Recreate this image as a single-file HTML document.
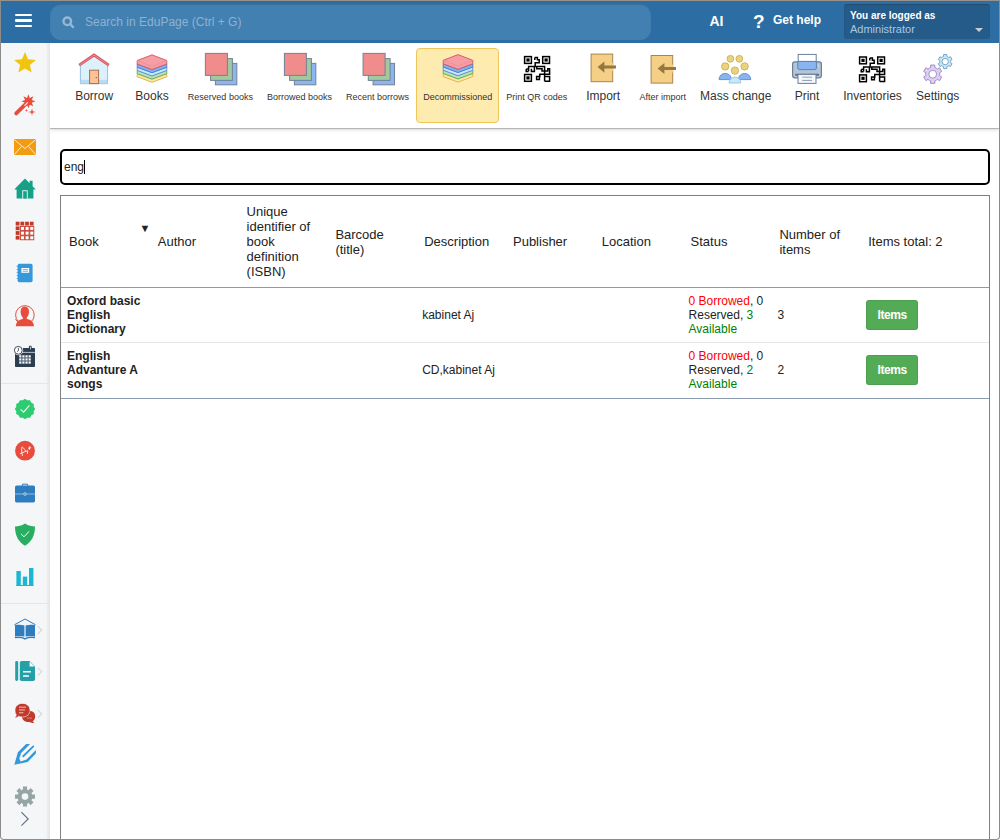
<!DOCTYPE html>
<html><head><meta charset="utf-8">
<style>
*{box-sizing:border-box}
html,body{margin:0;padding:0;width:1000px;height:840px;overflow:hidden;background:#fff;font-family:"Liberation Sans",sans-serif;color:#333}
.abs{position:absolute}
#frame{position:absolute;left:0;top:0;width:1000px;height:840px;border:1px solid #8c8c8c;border-top-color:#9a928a;border-radius:0 0 4px 4px;pointer-events:none;z-index:50}
#hdr{position:absolute;left:1px;top:1px;width:998px;height:42px;background:#2c6ea3;z-index:6}
.burger{position:absolute;left:13.6px;width:17.6px;height:2.2px;background:#fff;border-radius:1px}
#search{position:absolute;left:49px;top:3px;width:601px;height:35.5px;border-radius:11px;background:#4280b1;box-shadow:inset 0 1px 1px rgba(0,0,0,.12)}
#search .ph{position:absolute;left:35px;top:11px;font-size:12px;color:#8db2d2;white-space:nowrap}
#side{position:absolute;left:1px;top:43px;width:49px;height:796px;background:#f4f6f8;border-right:1px solid #e3e5e8;box-shadow:inset -3px 0 2px -1px rgba(0,0,0,.05);z-index:5;border-bottom-left-radius:3px}
#tb{position:absolute;left:50px;top:43px;width:949px;height:85px;background:#fff;box-shadow:0 1px 1px rgba(0,0,0,.22),0 2px 4px rgba(0,0,0,.12);z-index:4}
.lbl{position:absolute;top:89px;width:120px;text-align:center;font-size:12px;color:#333;white-space:nowrap;z-index:5;line-height:14px}
.lbl.s{font-size:9px;top:91px;line-height:12px}
#tbl{position:absolute;left:60px;top:195px;width:930px;height:660px;border:1px solid #808080}
table{border-collapse:collapse;table-layout:fixed;width:928px;font-family:"Liberation Sans",sans-serif}
th{font-weight:normal;font-size:13px;line-height:15px;text-align:left;padding:8px 8px 8px 8px;vertical-align:middle;color:#222;height:91px;border-bottom:1px solid #8a9bb0}
td{font-size:12px;line-height:14px;padding:6px 6px;vertical-align:middle;color:#222;border-bottom:1px solid #e6e6e6}
tr.last td{border-bottom:1px solid #8a9bb0;padding-bottom:7px}
td b{font-weight:bold}
.red{color:#f00}.grn{color:#008000}
.ibtn{display:inline-block;width:52px;height:30px;background:#54ab56;border-radius:3px;color:#fff;font-weight:bold;font-size:12px;line-height:30px;text-align:center;letter-spacing:-0.4px;box-shadow:inset 0 0 0 1px rgba(0,0,0,.07)}
</style></head><body>
<div id="hdr">
  <div class="burger" style="top:12.9px"></div>
  <div class="burger" style="top:18.4px"></div>
  <div class="burger" style="top:23.8px"></div>
  <div id="search">
    <svg class="abs" style="left:12px;top:12px" width="13" height="13" viewBox="0 0 13 13"><circle cx="5.3" cy="5.3" r="3.8" fill="none" stroke="#94b7d5" stroke-width="2.4"/><line x1="8" y1="8" x2="11.1" y2="11.1" stroke="#94b7d5" stroke-width="2.4" stroke-linecap="round"/></svg>
    <div class="ph">Search in EduPage (Ctrl + G)</div>
  </div>
  <div class="abs" style="left:708.5px;top:12px;font-size:14px;font-weight:bold;color:#fff">AI</div>
  <div class="abs" style="left:752px;top:10px;font-size:19px;font-weight:bold;color:#fff">?</div>
  <div class="abs" style="left:772px;top:12px;font-size:12px;font-weight:bold;color:#fff">Get help</div>
  <div class="abs" style="left:843px;top:3px;width:146px;height:35px;background:#255b89;border-radius:3px;box-shadow:inset 0 1px 1px rgba(0,0,0,.15)">
    <div class="abs" style="left:6px;top:6px;font-size:10px;font-weight:bold;color:#fff;white-space:nowrap">You are logged as</div>
    <div class="abs" style="left:6px;top:19px;font-size:11px;color:#a9c7e3;white-space:nowrap">Administrator</div>
    <div class="abs" style="left:131px;top:24px;width:0;height:0;border-left:4px solid transparent;border-right:4px solid transparent;border-top:4px solid #c8ccd0"></div>
  </div>
</div>

<div id="side"></div>
<svg class="abs" style="left:0;top:0;z-index:6" width="50" height="840" viewBox="0 0 50 840"><polygon points="25.00,52.00 28.00,59.27 35.84,59.88 29.85,64.98 31.70,72.62 25.00,68.50 18.30,72.62 20.15,64.98 14.16,59.88 22.00,59.27" fill="#f1c40f"/><polygon points="28.40,94.30 29.78,97.97 33.35,96.35 31.73,99.92 35.40,101.30 31.73,102.68 33.35,106.25 29.78,104.63 28.40,108.30 27.02,104.63 23.45,106.25 25.07,102.68 21.40,101.30 25.07,99.92 23.45,96.35 27.02,97.97" fill="#e74c3c"/><line x1="16.2" y1="113.4" x2="27.4" y2="102.4" stroke="#e74c3c" stroke-width="3.8" stroke-linecap="round"/><line x1="24.8" y1="105.4" x2="27.6" y2="102.6" stroke="#fff" stroke-width="1.1" stroke-linecap="round" opacity=".95"/><polygon points="32.00,108.40 32.78,111.22 35.60,112.00 32.78,112.78 32.00,115.60 31.22,112.78 28.40,112.00 31.22,111.22" fill="#e74c3c"/><polygon points="26.40,108.70 26.82,109.98 28.10,110.40 26.82,110.82 26.40,112.10 25.98,110.82 24.70,110.40 25.98,109.98" fill="#e74c3c"/><rect x="14" y="139" width="22" height="16" fill="#f39c12"/><path d="M14.3,139.6 L25,148.6 L35.7,139.6 M14.3,154.6 L21.3,146.6 M35.7,154.6 L28.7,146.6" stroke="#fff" stroke-width="0.9" fill="none" opacity=".9"/><path d="M14.2,189.6 L25,178.6 L29.6,183.2 L29.6,180.8 L32.6,180.8 L32.6,186.2 L35.8,189.6 L33.4,189.6 L33.4,198.6 L16.6,198.6 L16.6,189.6 Z" fill="#16a085"/><rect x="22.3" y="190.3" width="5.4" height="8.3" fill="#fff" opacity=".95"/><rect x="23.2" y="191.2" width="3.6" height="7.4" fill="#16a085"/><rect x="15.70" y="221.70" width="3.80" height="3.80" fill="#c0392b"/><rect x="20.40" y="221.70" width="3.80" height="3.80" fill="#c0392b"/><rect x="25.10" y="221.70" width="3.80" height="3.80" fill="#c0392b"/><rect x="29.80" y="221.70" width="3.80" height="3.80" fill="#c0392b"/><rect x="15.70" y="226.40" width="3.80" height="3.80" fill="#c0392b"/><rect x="19.90" y="225.90" width="4.90" height="4.90" fill="#c0392b"/><rect x="20.85" y="226.85" width="3.10" height="3.10" fill="#fff"/><rect x="24.60" y="225.90" width="4.90" height="4.90" fill="#c0392b"/><rect x="25.55" y="226.85" width="3.10" height="3.10" fill="#fff"/><rect x="29.30" y="225.90" width="4.90" height="4.90" fill="#c0392b"/><rect x="30.25" y="226.85" width="3.10" height="3.10" fill="#fff"/><rect x="15.70" y="231.10" width="3.80" height="3.80" fill="#c0392b"/><rect x="19.90" y="230.60" width="4.90" height="4.90" fill="#c0392b"/><rect x="20.85" y="231.55" width="3.10" height="3.10" fill="#fff"/><rect x="24.60" y="230.60" width="4.90" height="4.90" fill="#c0392b"/><rect x="25.55" y="231.55" width="3.10" height="3.10" fill="#fff"/><rect x="29.30" y="230.60" width="4.90" height="4.90" fill="#c0392b"/><rect x="30.25" y="231.55" width="3.10" height="3.10" fill="#fff"/><rect x="15.70" y="235.80" width="3.80" height="3.80" fill="#c0392b"/><rect x="19.90" y="235.30" width="4.90" height="4.90" fill="#c0392b"/><rect x="20.85" y="236.25" width="3.10" height="3.10" fill="#fff"/><rect x="24.60" y="235.30" width="4.90" height="4.90" fill="#c0392b"/><rect x="25.55" y="236.25" width="3.10" height="3.10" fill="#fff"/><rect x="29.30" y="235.30" width="4.90" height="4.90" fill="#c0392b"/><rect x="30.25" y="236.25" width="3.10" height="3.10" fill="#fff"/><rect x="17.6" y="263.8" width="15" height="18.4" rx="1.6" fill="#3498db"/><line x1="16.6" y1="266.5" x2="18.6" y2="266.5" stroke="#3498db" stroke-width="0.9" opacity=".8"/><line x1="16.6" y1="269.5" x2="18.6" y2="269.5" stroke="#3498db" stroke-width="0.9" opacity=".8"/><line x1="16.6" y1="272.5" x2="18.6" y2="272.5" stroke="#3498db" stroke-width="0.9" opacity=".8"/><line x1="16.6" y1="275.5" x2="18.6" y2="275.5" stroke="#3498db" stroke-width="0.9" opacity=".8"/><line x1="16.6" y1="278.5" x2="18.6" y2="278.5" stroke="#3498db" stroke-width="0.9" opacity=".8"/><rect x="21.4" y="268" width="7.8" height="4.8" fill="#fff"/><line x1="22.6" y1="269.6" x2="28" y2="269.6" stroke="#3498db" stroke-width="0.7"/><line x1="22.6" y1="271.3" x2="28" y2="271.3" stroke="#3498db" stroke-width="0.7"/><path d="M18.2,321.4 A9.3,9.3 0 1,1 31.2,321.8" fill="none" stroke="#e74c3c" stroke-width="1"/><path d="M15.4,319.4 L18.2,322 L20.8,320.4" fill="none" stroke="#e74c3c" stroke-width="1"/><path d="M24.8,306.6 C27.6,306.6 29,308.8 29,311.8 C29,314.4 28,316.4 26.8,317.4 L26.8,319 C30.6,319.6 33.6,321.4 34,326.2 L15.8,326.2 C16.2,321.4 19.2,319.6 22.8,319 L22.8,317.4 C21.6,316.4 20.6,314.4 20.6,311.8 C20.6,308.8 22,306.6 24.8,306.6 Z" fill="#e74c3c"/><rect x="15" y="348" width="20" height="19" rx="0.8" fill="#2c3e50"/><line x1="22" y1="352.4" x2="35" y2="352.4" stroke="#c8ced6" stroke-width="0.9"/><rect x="28.9" y="345.8" width="2.8" height="4.4" rx="1" fill="#2c3e50"/><rect x="30" y="346.6" width="0.8" height="2.8" fill="#dde2e8"/><rect x="19" y="355" width="12" height="9" fill="#5d6c7c"/><rect x="19.30" y="355.40" width="1.9" height="1.9" fill="#fff"/><rect x="22.45" y="355.40" width="1.9" height="1.9" fill="#fff"/><rect x="25.60" y="355.40" width="1.9" height="1.9" fill="#fff"/><rect x="28.75" y="355.40" width="1.9" height="1.9" fill="#fff"/><rect x="19.30" y="358.50" width="1.9" height="1.9" fill="#fff"/><rect x="22.45" y="358.50" width="1.9" height="1.9" fill="#fff"/><rect x="25.60" y="358.50" width="1.9" height="1.9" fill="#fff"/><rect x="28.75" y="358.50" width="1.9" height="1.9" fill="#fff"/><rect x="19.30" y="361.60" width="1.9" height="1.9" fill="#fff"/><rect x="22.45" y="361.60" width="1.9" height="1.9" fill="#fff"/><rect x="25.60" y="361.60" width="1.9" height="1.9" fill="#fff"/><rect x="28.75" y="361.60" width="1.9" height="1.9" fill="#fff"/><circle cx="18.3" cy="350.3" r="4.9" fill="#f4f6f8"/><circle cx="18.3" cy="350.3" r="3.9" fill="#fff" stroke="#2c3e50" stroke-width="0.9"/><path d="M18.4,347.8 L18.4,350.8 L17.2,351.6" stroke="#2c3e50" stroke-width="0.8" fill="none"/><rect x="0" y="383" width="49" height="1" fill="#e3e5e8"/><polygon points="25.00,398.80 27.33,400.31 30.10,400.17 31.36,402.64 33.83,403.90 33.69,406.67 35.20,409.00 33.69,411.33 33.83,414.10 31.36,415.36 30.10,417.83 27.33,417.69 25.00,419.20 22.67,417.69 19.90,417.83 18.64,415.36 16.17,414.10 16.31,411.33 14.80,409.00 16.31,406.67 16.17,403.90 18.64,402.64 19.90,400.17 22.67,400.31" fill="#2ecc71"/><path d="M20.6,409.4 L23.6,412.2 L29.4,405.4" stroke="#fff" stroke-width="1.1" fill="none" opacity=".9"/><circle cx="25" cy="450.7" r="9.9" fill="#e74c3c"/><path d="M22.4,455.6 C21.7,452.2 21.4,449.2 21.9,447.2 C22.8,446.8 24.2,448.8 25.4,450.6 M20.4,453.6 C23,452.4 25.6,451.2 27.8,450.8 L27.4,453.4 M28.4,448.2 L30.8,447.8 M29.8,446.6 L29.4,449.4" stroke="#fff" stroke-width="0.9" fill="none" stroke-linecap="round" opacity=".95"/><rect x="15" y="485.6" width="20" height="16.8" rx="1.6" fill="#2d7dbf"/><path d="M22.4,485.8 L22.4,484.2 L27.6,484.2 L27.6,485.8" stroke="#2d7dbf" stroke-width="1" fill="none"/><line x1="15" y1="494" x2="35" y2="494" stroke="#9cc3e4" stroke-width="0.9"/><circle cx="25" cy="494" r="1.3" fill="#2d7dbf" stroke="#cfe2f2" stroke-width="0.8"/><path d="M25,523.4 C28.4,525.6 31.6,526.4 35,526.4 C35,536 31.2,542 25,545.8 C18.8,542 15,536 15,526.4 C18.4,526.4 21.6,525.6 25,523.4 Z" fill="#27ae60"/><path d="M21.2,534 L24,536.8 L29,531.4" stroke="#fff" stroke-width="1" fill="none"/><rect x="16.4" y="571" width="4.4" height="15" fill="#1ab6d2"/><rect x="22.8" y="576.6" width="4.4" height="9.4" fill="#1ab6d2"/><rect x="29" y="568" width="4.4" height="18" fill="#1ab6d2"/><rect x="16.4" y="585" width="17" height="1" fill="#1ab6d2"/><rect x="0" y="603" width="49" height="1" fill="#e3e5e8"/><path d="M14.4,624.8 L25,619 L35.6,624.8" stroke="#2d7dbf" stroke-width="1" fill="none"/><path d="M15,625.2 C18,624.6 21.4,624.6 24.4,625.6 L24.4,636.6 C21.4,635.8 18,635.8 15,636.4 Z" fill="#2d7dbf"/><path d="M35,625.2 C32,624.6 28.6,624.6 25.6,625.6 L25.6,636.6 C28.6,635.8 32,635.8 35,636.4 Z" fill="#2d7dbf"/><path d="M15,637.6 C18.5,637 22,637 25,638.8 C28,637 31.5,637 35,637.6" stroke="#2d7dbf" stroke-width="1.5" fill="none"/><rect x="15.2" y="661" width="3" height="20" rx="1.4" fill="#26a0a7"/><path d="M21.6,661 L29.6,661 L35,666.4 L35,679.2 Q35,681 33.2,681 L21.6,681 Q19.8,681 19.8,679.2 L19.8,662.8 Q19.8,661 21.6,661 Z" fill="#26a0a7"/><path d="M29.6,661.6 L34.4,666.4 L29.6,666.4 Z" fill="#fff"/><rect x="23" y="671" width="8" height="1.6" rx=".6" fill="#fff"/><rect x="23" y="675.2" width="6" height="1.6" rx=".6" fill="#fff"/><path d="M28.6,710.8 C33.4,710.8 35.2,713.4 35.2,716.4 C35.2,718.6 34.2,720.2 32.6,721.2 L34.4,723 C32.2,723 30.4,722.4 29,722 C24.8,722 22,719.8 22,716.4 C22,713.4 24,710.8 28.6,710.8 Z" fill="#c0392b"/><path d="M22.5,703.4 C27.2,703.4 30,706.4 30,710.2 C30,714 27.2,717 22.5,717 C21,717 19.8,716.8 18.6,716.2 C17.6,717.2 16.2,718 14.8,718 C15.8,717 16.2,715.8 16.2,714.6 C15.4,713.4 15,712 15,710.2 C15,706.4 17.8,703.4 22.5,703.4 Z" fill="#c0392b" stroke="#f4f6f8" stroke-width=".6"/><rect x="19" y="706.6" width="7" height="1.1" fill="#f1b4ad"/><rect x="19" y="709.4" width="6" height="1.1" fill="#f1b4ad"/><rect x="19" y="712.2" width="4.4" height="1.1" fill="#f1b4ad"/><rect x="27" y="717.6" width="5" height="0.9" fill="#e6867c"/><path d="M26.1,744.1 L30.1,744.1 L21.2,752.9 L19.3,758.6 L20.6,761.4 L26.6,759.4 L35.9,750.1 L35.9,753.6 L27.6,762 L14.3,764.8 L17.9,752.3 Z" fill="#3498db"/><line x1="23.2" y1="756.2" x2="33.3" y2="746.4" stroke="#3498db" stroke-width="1.9" stroke-linecap="round"/><path d="M22.96,789.49 L22.90,786.62 L27.10,786.62 L27.04,789.49 L27.83,789.76 L28.58,790.13 L30.58,788.06 L33.54,791.02 L31.47,793.02 L31.84,793.77 L32.11,794.56 L34.98,794.50 L34.98,798.70 L32.11,798.64 L31.84,799.43 L31.47,800.18 L33.54,802.18 L30.58,805.14 L28.58,803.07 L27.83,803.44 L27.04,803.71 L27.10,806.58 L22.90,806.58 L22.96,803.71 L22.17,803.44 L21.42,803.07 L19.42,805.14 L16.46,802.18 L18.53,800.18 L18.16,799.43 L17.89,798.64 L15.02,798.70 L15.02,794.50 L17.89,794.56 L18.16,793.77 L18.53,793.02 L16.46,791.02 L19.42,788.06 L21.42,790.13 L22.17,789.76 Z M28.30,796.60 A3.3,3.3 0 1,0 21.70,796.60 A3.3,3.3 0 1,0 28.30,796.60 Z" fill="#95a5a6" fill-rule="evenodd"/><path d="M37.8,626.2 L41.8,630 L37.8,633.8" stroke="#d4d8dc" stroke-width="1.1" fill="none"/><path d="M37.8,667.8000000000001 L41.8,671.6 L37.8,675.4" stroke="#d4d8dc" stroke-width="1.1" fill="none"/><path d="M37.8,710.2 L41.8,714 L37.8,717.8" stroke="#d4d8dc" stroke-width="1.1" fill="none"/><path d="M21.4,812.2 L28.2,819 L21.4,825.6" stroke="#5d6e86" stroke-width="1.1" fill="none"/></svg>
<div id="tb"></div>
<div class="abs" style="left:416px;top:47.5px;width:83px;height:75px;background:#fdebb0;border:1px solid #f0c65c;border-radius:4px;z-index:5"></div>
<svg class="abs" style="left:0;top:0;z-index:5" width="1000" height="130" viewBox="0 0 1000 130"><path d="M80.4,65 L94,55.6 L107.6,65 L107.6,83.7 L80.4,83.7 Z" fill="#dcf1fc" stroke="#9bbde0" stroke-width="1"/><rect x="80.9" y="79.8" width="26.2" height="3.4" fill="#b9dcf5"/><path d="M79.2,65.2 L94,55 L108.8,65.2" stroke="#d95762" stroke-width="2.8" fill="none" stroke-linejoin="miter"/><path d="M79.6,65 L94,55.1 L108.4,65" stroke="#f08a92" stroke-width="1.0" fill="none" stroke-linejoin="miter"/><rect x="89.6" y="70.2" width="9" height="13.4" fill="#fec297" stroke="#a86e4e" stroke-width="1"/><circle cx="96.3" cy="77.6" r=".7" fill="#7a4a30"/><path d="M137.2,73.60 L152,79.10 L166.8,73.60 L166.8,76.80 L152,82.30 L137.2,76.80 Z" fill="#fde79a" stroke="#d5b24e" stroke-width="0.9" stroke-linejoin="round"/><path d="M137.2,70.40 L152,75.90 L166.8,70.40 L166.8,73.60 L152,79.10 L137.2,73.60 Z" fill="#b8e2b8" stroke="#5ea865" stroke-width="0.9" stroke-linejoin="round"/><path d="M137.2,67.20 L152,72.70 L166.8,67.20 L166.8,70.40 L152,75.90 L137.2,70.40 Z" fill="#c6eafc" stroke="#5a8fd4" stroke-width="0.9" stroke-linejoin="round"/><path d="M137.2,64.00 L152,69.50 L166.8,64.00 L166.8,67.20 L152,72.70 L137.2,67.20 Z" fill="#80b0f2" stroke="#4a7ed0" stroke-width="0.9" stroke-linejoin="round"/><path d="M152,54.8 L166.8,60.5 L166.8,64.0 L152,69.5 L137.2,64.0 L137.2,60.5 Z" fill="#f59ea6" stroke="#d9535e" stroke-width="0.9" stroke-linejoin="round"/><path d="M137.7,60.8 L152,66.2 L166.3,60.8" fill="none" stroke="#ec8a92" stroke-width="0.7"/><path d="M443.2,73.40 L458,78.90 L472.8,73.40 L472.8,76.60 L458,82.10 L443.2,76.60 Z" fill="#fde79a" stroke="#d5b24e" stroke-width="0.9" stroke-linejoin="round"/><path d="M443.2,70.20 L458,75.70 L472.8,70.20 L472.8,73.40 L458,78.90 L443.2,73.40 Z" fill="#b8e2b8" stroke="#5ea865" stroke-width="0.9" stroke-linejoin="round"/><path d="M443.2,67.00 L458,72.50 L472.8,67.00 L472.8,70.20 L458,75.70 L443.2,70.20 Z" fill="#c6eafc" stroke="#5a8fd4" stroke-width="0.9" stroke-linejoin="round"/><path d="M443.2,63.80 L458,69.30 L472.8,63.80 L472.8,67.00 L458,72.50 L443.2,67.00 Z" fill="#80b0f2" stroke="#4a7ed0" stroke-width="0.9" stroke-linejoin="round"/><path d="M458,54.6 L472.8,60.300000000000004 L472.8,63.8 L458,69.3 L443.2,63.8 L443.2,60.300000000000004 Z" fill="#f59ea6" stroke="#d9535e" stroke-width="0.9" stroke-linejoin="round"/><path d="M443.7,60.6 L458,66.0 L472.3,60.6" fill="none" stroke="#ec8a92" stroke-width="0.7"/><rect x="215.40" y="63.40" width="21.4" height="21.4" fill="#8ab6f2" stroke="#74849a" stroke-width="1.05"/><rect x="210.60" y="58.60" width="21.8" height="21.8" fill="#a2c99e" stroke="#74849a" stroke-width="1.05"/><rect x="205.40" y="53.40" width="22" height="22" fill="#f08c8c" stroke="#74849a" stroke-width="1.05"/><rect x="294.40" y="63.40" width="21.4" height="21.4" fill="#8ab6f2" stroke="#74849a" stroke-width="1.05"/><rect x="289.60" y="58.60" width="21.8" height="21.8" fill="#a2c99e" stroke="#74849a" stroke-width="1.05"/><rect x="284.40" y="53.40" width="22" height="22" fill="#f08c8c" stroke="#74849a" stroke-width="1.05"/><rect x="373.10" y="63.40" width="21.4" height="21.4" fill="#8ab6f2" stroke="#74849a" stroke-width="1.05"/><rect x="368.30" y="58.60" width="21.8" height="21.8" fill="#a2c99e" stroke="#74849a" stroke-width="1.05"/><rect x="363.10" y="53.40" width="22" height="22" fill="#f08c8c" stroke="#74849a" stroke-width="1.05"/><rect x="524.60" y="56.60" width="6.80" height="6.80" fill="none" stroke="#000" stroke-width="1.5"/><rect x="526.40" y="58.40" width="3.20" height="3.20" fill="#000"/><rect x="542.70" y="56.60" width="6.80" height="6.80" fill="none" stroke="#000" stroke-width="1.5"/><rect x="544.50" y="58.40" width="3.20" height="3.20" fill="#000"/><rect x="524.60" y="74.50" width="6.80" height="6.80" fill="none" stroke="#000" stroke-width="1.5"/><rect x="526.40" y="76.30" width="3.20" height="3.20" fill="#000"/><polyline points="534.80,57.60 537.40,57.60 537.40,59.80 539.20,59.80 539.20,62.80 535.20,62.80 535.20,66.40" fill="none" stroke="#000" stroke-width="1.5"/><polyline points="534.80,57.60 534.80,60.00" fill="none" stroke="#000" stroke-width="1.5"/><polyline points="528.60,71.20 528.60,66.60 544.60,66.60 544.60,81.20" fill="none" stroke="#000" stroke-width="1.5"/><polyline points="526.20,69.00 528.60,69.00" fill="none" stroke="#000" stroke-width="1.5"/><polyline points="526.20,69.00 526.20,71.40 528.60,71.40" fill="none" stroke="#000" stroke-width="1.5"/><polyline points="531.40,68.80 531.40,71.40 534.40,71.40 534.40,66.60" fill="none" stroke="#000" stroke-width="1.5"/><polyline points="536.80,66.60 536.80,68.80 542.00,68.80 542.00,71.00 547.80,71.00 547.80,68.80 549.60,68.80 549.60,74.20 539.80,74.20 539.80,76.60 536.60,76.60 536.60,79.40 539.40,79.40 539.40,76.60" fill="none" stroke="#000" stroke-width="1.5"/><polyline points="544.60,76.60 549.60,76.60 549.60,81.20 544.60,81.20" fill="none" stroke="#000" stroke-width="1.5"/><rect x="859.60" y="57.00" width="6.80" height="6.80" fill="none" stroke="#000" stroke-width="1.5"/><rect x="861.40" y="58.80" width="3.20" height="3.20" fill="#000"/><rect x="877.70" y="57.00" width="6.80" height="6.80" fill="none" stroke="#000" stroke-width="1.5"/><rect x="879.50" y="58.80" width="3.20" height="3.20" fill="#000"/><rect x="859.60" y="74.90" width="6.80" height="6.80" fill="none" stroke="#000" stroke-width="1.5"/><rect x="861.40" y="76.70" width="3.20" height="3.20" fill="#000"/><polyline points="869.80,58.00 872.40,58.00 872.40,60.20 874.20,60.20 874.20,63.20 870.20,63.20 870.20,66.80" fill="none" stroke="#000" stroke-width="1.5"/><polyline points="869.80,58.00 869.80,60.40" fill="none" stroke="#000" stroke-width="1.5"/><polyline points="863.60,71.60 863.60,67.00 879.60,67.00 879.60,81.60" fill="none" stroke="#000" stroke-width="1.5"/><polyline points="861.20,69.40 863.60,69.40" fill="none" stroke="#000" stroke-width="1.5"/><polyline points="861.20,69.40 861.20,71.80 863.60,71.80" fill="none" stroke="#000" stroke-width="1.5"/><polyline points="866.40,69.20 866.40,71.80 869.40,71.80 869.40,67.00" fill="none" stroke="#000" stroke-width="1.5"/><polyline points="871.80,67.00 871.80,69.20 877.00,69.20 877.00,71.40 882.80,71.40 882.80,69.20 884.60,69.20 884.60,74.60 874.80,74.60 874.80,77.00 871.60,77.00 871.60,79.80 874.40,79.80 874.40,77.00" fill="none" stroke="#000" stroke-width="1.5"/><polyline points="879.60,77.00 884.60,77.00 884.60,81.60 879.60,81.60" fill="none" stroke="#000" stroke-width="1.5"/><rect x="591.1" y="54.1" width="21.6" height="27.6" fill="#f5cf85" stroke="#a8854a" stroke-width="1"/><rect x="612.0" y="63.123999999999995" width="1.4" height="8" fill="#f5cf85"/><path d="M597.6,67.124 L604.4,61.523999999999994 L604.4,65.624 L616,65.624 L616,68.624 L604.4,68.624 L604.4,72.72399999999999 Z" fill="#957840"/><rect x="651.1" y="55.5" width="21.6" height="27.6" fill="#f5cf85" stroke="#a8854a" stroke-width="1"/><rect x="672.0" y="64.524" width="1.4" height="8" fill="#f5cf85"/><path d="M657.6,68.524 L664.4,62.924 L664.4,67.024 L676,67.024 L676,70.024 L664.4,70.024 L664.4,74.124 Z" fill="#957840"/><path d="M719,79.6 A6.2,6.2 0 0,1 731.4,79.6 Z" fill="#88b4f0" stroke="#5a88d0" stroke-width="0.9"/><path d="M738.4,79.6 A6.2,6.2 0 0,1 750.8,79.6 Z" fill="#88b4f0" stroke="#5a88d0" stroke-width="0.9"/><path d="M729,83 A5.9,5.9 0 0,1 740.8,83 Z" fill="#c6e8fb" stroke="#9cc0e0" stroke-width="0.9"/><circle cx="730.4" cy="58.8" r="3.4" fill="#e8d47c" stroke="#c8a850" stroke-width="0.8"/><circle cx="739.4" cy="58.8" r="3.4" fill="#e8d47c" stroke="#c8a850" stroke-width="0.8"/><circle cx="725.2" cy="66.4" r="3.7" fill="#e8d47c" stroke="#c8a850" stroke-width="0.8"/><circle cx="744.6" cy="66.4" r="3.7" fill="#e8d47c" stroke="#c8a850" stroke-width="0.8"/><circle cx="734.9" cy="70.6" r="3.7" fill="#e8d47c" stroke="#c8a850" stroke-width="0.8"/><rect x="798.2" y="54.4" width="18" height="8" fill="#fff" stroke="#6c7f96" stroke-width="1"/><rect x="792.6" y="61.8" width="28.8" height="16" rx="2.2" fill="#b4c4d8" stroke="#6c7f96" stroke-width="1.2"/><path d="M797.8,61.4 L816.4,61.4 L816.4,68 Q816.4,69.6 814.8,69.6 L799.4,69.6 Q797.8,69.6 797.8,68 Z" fill="#8ab4f0" stroke="#5a80c0" stroke-width="1"/><line x1="796" y1="74.8" x2="818.2" y2="74.8" stroke="#5c6f86" stroke-width="2" stroke-linecap="round"/><rect x="798" y="74.4" width="18" height="9" fill="#f4f8fc" stroke="#6c7f96" stroke-width="1"/><line x1="802.2" y1="77.2" x2="812" y2="77.2" stroke="#a0b0c0" stroke-width="1.2"/><line x1="802.2" y1="80.4" x2="812" y2="80.4" stroke="#8a9cb0" stroke-width="1"/><circle cx="818.6" cy="65.6" r=".8" fill="#f4e070"/><path d="M930.54,67.54 L930.54,65.05 L934.86,65.05 L934.86,67.54 L936.20,68.14 L937.39,69.00 L939.55,67.76 L941.70,71.49 L939.55,72.74 L939.70,74.20 L939.55,75.66 L941.70,76.91 L939.55,80.64 L937.39,79.40 L936.20,80.26 L934.86,80.86 L934.86,83.35 L930.54,83.35 L930.54,80.86 L929.20,80.26 L928.01,79.40 L925.85,80.64 L923.70,76.91 L925.85,75.66 L925.70,74.20 L925.85,72.74 L923.70,71.49 L925.85,67.76 L928.01,69.00 L929.20,68.14 Z M936.60,74.20 A3.9,3.9 0 1,0 928.80,74.20 A3.9,3.9 0 1,0 936.60,74.20 Z" fill="#dccff2" stroke="#9d84c4" stroke-width="0.9" fill-rule="evenodd"/><path d="M943.54,56.46 L943.55,54.59 L946.85,54.59 L946.86,56.46 L947.90,56.92 L948.82,57.59 L950.44,56.67 L952.09,59.53 L950.48,60.47 L950.60,61.60 L950.48,62.73 L952.09,63.67 L950.44,66.53 L948.82,65.61 L947.90,66.28 L946.86,66.74 L946.85,68.61 L943.55,68.61 L943.54,66.74 L942.50,66.28 L941.58,65.61 L939.96,66.53 L938.31,63.67 L939.92,62.73 L939.80,61.60 L939.92,60.47 L938.31,59.53 L939.96,56.67 L941.58,57.59 L942.50,56.92 Z M948.40,61.60 A3.2,3.2 0 1,0 942.00,61.60 A3.2,3.2 0 1,0 948.40,61.60 Z" fill="#c9e9fb" stroke="#6d9cba" stroke-width="0.9" fill-rule="evenodd"/></svg>
<div class="lbl" style="left:34.2px">Borrow</div><div class="lbl" style="left:92px">Books</div><div class="lbl s" style="left:160.4px">Reserved books</div><div class="lbl s" style="left:239.5px">Borrowed books</div><div class="lbl s" style="left:317.5px">Recent borrows</div><div class="lbl s" style="left:397.8px">Decommissioned</div><div class="lbl s" style="left:476.79999999999995px">Print QR codes</div><div class="lbl" style="left:543.2px">Import</div><div class="lbl s" style="left:602.7px">After import</div><div class="lbl" style="left:675.7px">Mass change</div><div class="lbl" style="left:747px">Print</div><div class="lbl" style="left:812.5px">Inventories</div><div class="lbl" style="left:877.7px">Settings</div>

<!-- search input -->
<div class="abs" style="left:60px;top:149px;width:930px;height:36px;border:2px solid #000;border-radius:5px">
  <div class="abs" style="left:2px;top:9px;font-size:12px;color:#222">eng</div>
  <div class="abs" style="left:22px;top:9px;width:1px;height:14px;background:#000"></div>
</div>

<!-- table container -->
<div id="tbl">
<table>
<colgroup><col style="width:88.8px"><col style="width:88.8px"><col style="width:88.8px"><col style="width:88.8px"><col style="width:88.8px"><col style="width:88.8px"><col style="width:88.8px"><col style="width:88.8px"><col style="width:88.8px"><col></colgroup>
<tr><th>Book</th><th>Author</th><th>Unique identifier of book definition (ISBN)</th><th>Barcode (title)</th><th>Description</th><th>Publisher</th><th>Location</th><th>Status</th><th>Number of items</th><th>Items total: 2</th></tr>
<tr><td><b>Oxford basic English Dictionary</b></td><td></td><td></td><td></td><td>kabinet Aj</td><td></td><td></td><td><span class="red">0 Borrowed</span>, 0 Reserved, <span class="grn">3 Available</span></td><td>3</td><td><span class="ibtn">Items</span></td></tr>
<tr class="last"><td><b>English Advanture A songs</b></td><td></td><td></td><td></td><td>CD,kabinet Aj</td><td></td><td></td><td><span class="red">0 Borrowed</span>, 0 Reserved, <span class="grn">2 Available</span></td><td>2</td><td><span class="ibtn">Items</span></td></tr>
</table>
<div class="abs" style="left:78.5px;top:26px;font-size:11px;color:#222">&#9660;</div>
</div>

<div id="frame"></div>
</body></html>
